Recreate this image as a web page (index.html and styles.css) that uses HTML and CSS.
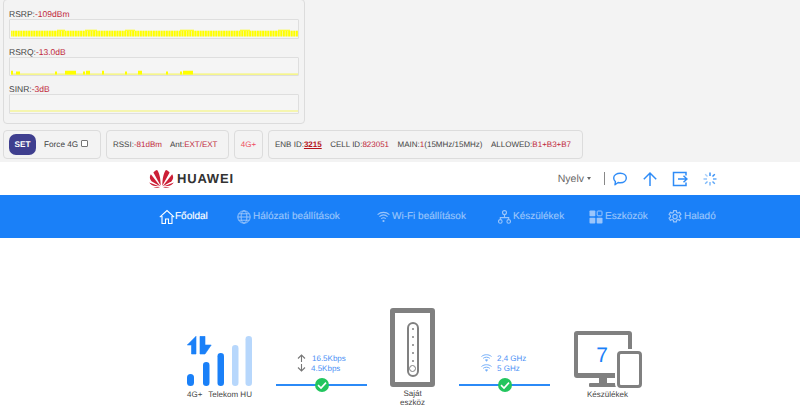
FILE: index.html
```html
<!DOCTYPE html>
<html lang="hu">
<head>
<meta charset="utf-8">
<title>HUAWEI</title>
<link rel="stylesheet" href="styles.css">
</head>
<body>
<section class="top">
  <div class="panel">
    <div class="metric"><span>RSRP:</span><span class="red">-109dBm</span></div>
    <svg class="chart" viewBox="0 0 288 18" preserveAspectRatio="none">
      <defs><pattern id="bars" width="2.6" height="18" patternUnits="userSpaceOnUse"><rect width="2" height="18" fill="#ffff00"/><rect x="2" width=".6" height="18" fill="#f6f68a"/></pattern></defs>
      <rect x="1" y="11" width="287" height="6" fill="url(#bars)"/>
      <path d="M47 10h8v1h-8zM75 10h12v1H75zM115 10h10v1h-10zM170 10h14v1h-14zM230 10h10v1h-10zM268 10h12v1h-12z" fill="#ffff00"/>
    </svg>
    <div class="metric"><span>RSRQ:</span><span class="red">-13.0dB</span></div>
    <svg class="chart" viewBox="0 0 288 18" preserveAspectRatio="none">
      <path d="M1 16h287v1.200H1z" fill="#f5f56a"/>
      <path d="M1 13h2v4H1zM6 14h4v3H6zM45 14h2v3h-2zM55 13h11v4H55zM73 14h2v3h-2zM76 13h4v4h-4zM92 13h2v4h-2zM115 14h2v3h-2zM128 13h4v4h-4zM156 14h2v3h-2zM170 14h2v3h-2zM173 13h10v4h-10z" fill="#ffff00"/>
    </svg>
    <div class="metric"><span>SINR:</span><span class="red">-3dB</span></div>
    <svg class="chart" viewBox="0 0 288 18" preserveAspectRatio="none">
      <path d="M0 16h288v1H0z" fill="#f5f56a"/>
    </svg>
  </div>
  <div class="boxes">
    <div class="box box-set">
      <span class="set">SET</span>
      <span class="force">Force 4G</span>
      <span class="check"></span>
    </div>
    <div class="box box-rssi"><span>RSSI:<span class="red">-81dBm</span></span><span>Ant:<span class="red">EXT/EXT</span></span></div>
    <div class="box box-mode"><span class="pink">4G+</span></div>
    <div class="box box-cell">
      <span>ENB ID:<a class="enb">3215</a></span>
      <span>CELL ID:<span class="red">823051</span></span>
      <span>MAIN:<span class="red">1</span>(15MHz/15MHz)</span>
      <span>ALLOWED:<span class="red">B1+B3+B7</span></span>
    </div>
  </div>
</section>

<header class="head">
  <div class="brand">
    <svg class="logo" viewBox="1 1 24 19.500" width="25" height="18" preserveAspectRatio="none">
      <g fill="#cc1f36">
        <path d="M12 19 3.400 13.200C2 11.300 1 8.600 2.800 5.600Z"/>
        <path d="M12.200 18 5.200 3.800C6 2.400 7.400 1.200 8.800 1c2.200 3 3.400 10 3.400 17Z"/>
        <path d="M13.800 18 20.800 3.800C20 2.400 18.600 1.200 17.200 1c-2.200 3-3.400 10-3.400 17Z"/>
        <path d="M14 19 22.600 13.200C24 11.300 25 8.600 23.200 5.600Z"/>
        <path d="M10.800 18.600 1.200 14.500c1 1.900 3.600 3.900 6 3.900l3.600.2Z"/>
        <path d="M15.200 18.600 24.800 14.500c-1 1.900-3.600 3.900-6 3.900l-3.600.2Z"/>
        <path d="M11.600 19.400H5.200c1.300.8 3.600 1.100 5.200.5Z"/>
        <path d="M14.400 19.400h6.400c-1.300.8-3.600 1.100-5.200.5Z"/>
      </g>
    </svg>
    <span class="wordmark">HUAWEI</span>
  </div>
  <div class="tools">
    <span class="lang">Nyelv<i class="caret"></i></span>
    <i class="divider"></i>
    <svg class="tool tool-chat" viewBox="0 0 16 16" width="16" height="16"><path d="M8.300 2.200c3.500 0 6 2 6 4.800s-2.500 4.800-6 4.800c-.8 0-1.500-.1-2.200-.3L3 13.800l.4-3.200C2.300 9.700 1.700 8.400 1.700 7c0-2.800 3-4.800 6.600-4.800Z" fill="none" stroke="#2f8cf7" stroke-width="1.400" stroke-linejoin="round"/></svg>
    <svg class="tool tool-up" viewBox="0 0 16 16" width="16" height="16"><path d="M8 15V2M1.800 8.200 8 2l6.200 6.200" fill="none" stroke="#2f8cf7" stroke-width="1.500"/></svg>
    <svg class="tool tool-exit" viewBox="0 0 16 16" width="16" height="16"><path d="M14 4.500V1.500H1.500v13H14v-3M6 8h9M11.500 4.800 15 8l-3.500 3.200" fill="none" stroke="#2f8cf7" stroke-width="1.500"/></svg>
    <svg class="tool tool-spin" viewBox="0 0 16 16" width="16" height="16"><g stroke-width="1.400" fill="none"><path d="M8 1.500v3.500" stroke="#2f8cf7"/><path d="m12.800 3.200-2.300 2.300" stroke="#2f8cf7"/><path d="M14.500 8H11" stroke="#5aa5f8"/><path d="m12.800 12.800-2.300-2.300" stroke="#5aa5f8"/><path d="M8 14.500V11" stroke="#7ab7f9"/><path d="m3.200 12.800 2.300-2.300" stroke="#7ab7f9"/><path d="M1.500 8H5" stroke="#8fc1fa"/><path d="m3.200 3.200 2.300 2.300" stroke="#a6cefb"/></g></svg>
  </div>
</header>

<nav class="nav">
  <a class="nav-item active">
    <svg viewBox="0 0 16 16" width="16" height="16"><path d="M.8 8.200 8 1.500l7.200 6.700M3 7v7.500h3.500V10h3v4.500H13V7" fill="none" stroke="currentColor" stroke-width="1.100"/></svg>
    <span>Főoldal</span>
  </a>
  <a class="nav-item">
    <svg viewBox="0 0 14 14" width="14" height="14"><g fill="none" stroke="currentColor" stroke-width="1"><circle cx="7" cy="7" r="6.200"/><ellipse cx="7" cy="7" rx="2.900" ry="6.200"/><path d="M.8 7h12.400M1.700 3.800h10.600M1.700 10.200h10.600"/></g></svg>
    <span>Hálózati beállítások</span>
  </a>
  <a class="nav-item">
    <svg viewBox="0 0 13 12" width="13" height="12"><g fill="none" stroke="currentColor" stroke-width="1.100"><path d="M.6 3.600c3.400-3 8.400-3 11.800 0M2.400 5.600c2.400-2 5.800-2 8.200 0M4.200 7.600c1.400-1 3.200-1 4.600 0"/></g><circle cx="6.500" cy="10" r="1.100" fill="currentColor"/></svg>
    <span>Wi-Fi beállítások</span>
  </a>
  <a class="nav-item">
    <svg viewBox="0 0 13 14" width="13" height="14"><g fill="none" stroke="currentColor" stroke-width="1.100"><circle cx="6.500" cy="2.600" r="2"/><circle cx="2.300" cy="11.400" r="1.800"/><circle cx="10.700" cy="11.400" r="1.800"/><path d="M6.500 4.600v3M2.300 9.600V7.600h8.400v2"/></g></svg>
    <span>Készülékek</span>
  </a>
  <a class="nav-item">
    <svg viewBox="0 0 14 14" width="14" height="14"><g fill="currentColor"><rect x=".5" y=".5" width="5.800" height="5.800" rx=".8"/><rect x=".5" y="7.700" width="5.800" height="5.800" rx=".8"/><rect x="7.700" y="7.700" width="5.800" height="5.800" rx=".8"/></g><rect x="8.200" y="1" width="4.800" height="4.800" rx=".8" fill="none" stroke="currentColor"/></svg>
    <span>Eszközök</span>
  </a>
  <a class="nav-item">
    <svg viewBox="0 0 14 14" width="14" height="14"><g fill="none" stroke="currentColor" stroke-width="1.200"><path d="M5.700.7h2.600l.4 1.800 1.300.6 1.600-.9 1.300 2.200-1.400 1.200v1.400l1.400 1.200-1.300 2.200-1.600-.9-1.300.6-.4 1.800H5.700l-.4-1.800-1.300-.6-1.600.9L1.100 8.200l1.400-1.200V5.600L1.100 4.400l1.300-2.200 1.600.9 1.300-.6Z"/><circle cx="7" cy="6.600" r="2.200"/></g></svg>
    <span>Haladó</span>
  </a>
</nav>

<main class="stage">
  <div class="col col-signal">
    <svg viewBox="0 0 66 50" width="66" height="50">
      <g fill="#1a80f8">
        <path d="M.3 9 9 .3V18H4.500V9ZM13 .3h5V9h6.200L18 18h-5Z" stroke="#1a80f8" stroke-width=".6" stroke-linejoin="round"/>
        <rect y="38" width="7" height="12" rx="3.500"/>
        <rect x="16" y="26" width="6.500" height="24" rx="3.200"/>
        <rect x="30.500" y="17" width="6.500" height="33" rx="3.200"/>
      </g>
      <g fill="#b7d7fc">
        <rect x="45" y="9" width="6.500" height="41" rx="3.200"/>
        <rect x="58.500" y="0" width="6.500" height="50" rx="3.200"/>
      </g>
    </svg>
    <div class="signal-labels"><span>4G+</span><span>Telekom HU</span></div>
  </div>
  <div class="col col-link col-link-up">
    <div class="rate"><svg viewBox="0 0 9 8" width="9" height="8"><path d="M4.500 8V1M1 4.500l3.500-3.500 3.500 3.500" fill="none" stroke="#777" stroke-width="1.100"/></svg><span class="rate-a">16.5Kbps</span></div>
    <div class="rate"><svg viewBox="0 0 9 8" width="9" height="8"><path d="M4.500 0v7M1 3.500l3.500 3.500 3.500-3.500" fill="none" stroke="#777" stroke-width="1.100"/></svg><span class="rate-b">4.5Kbps</span></div>
    <svg class="link" viewBox="0 0 91 14" width="91" height="14"><path d="M0 7h91" stroke="#2b8af7" stroke-width="2"/><circle cx="46" cy="7" r="7" fill="#22c55e"/><path d="m42 7.200 3 2.800 5-5.400" fill="none" stroke="#fff" stroke-width="1.600"/></svg>
  </div>
  <div class="col col-router">
    <div class="router"><div class="pill"><i></i><i></i><i></i><i></i><i></i><b></b></div></div>
    <div class="router-label">Saját<br>eszköz</div>
  </div>
  <div class="col col-link col-link-wifi">
    <div class="rate rate-w"><svg viewBox="0 0 11 8" width="11" height="8"><g fill="none" stroke="#74aef8" stroke-width="1"><path d="M.5 2.500c3-2.400 7-2.400 10 0M2.200 4.300c2-1.500 4.600-1.500 6.600 0"/></g><path d="M3.800 5.800c1-.7 2.400-.7 3.400 0L5.500 7.800Z" fill="#74aef8"/></svg><span>2,4 GHz</span></div>
    <div class="rate rate-w"><svg viewBox="0 0 11 8" width="11" height="8"><g fill="none" stroke="#74aef8" stroke-width="1"><path d="M.5 2.500c3-2.400 7-2.400 10 0M2.200 4.300c2-1.500 4.600-1.500 6.600 0"/></g><path d="M3.800 5.800c1-.7 2.400-.7 3.400 0L5.500 7.800Z" fill="#74aef8"/></svg><span>5 GHz</span></div>
    <svg class="link" viewBox="0 0 91 14" width="91" height="14"><path d="M0 7h91" stroke="#2b8af7" stroke-width="2"/><circle cx="46" cy="7" r="7" fill="#22c55e"/><path d="m42 7.200 3 2.800 5-5.400" fill="none" stroke="#fff" stroke-width="1.600"/></svg>
  </div>
  <div class="col col-devices">
    <div class="devices">
      <div class="monitor-wrap">
        <div class="monitor"><span class="count">7</span></div>
        <div class="neck"></div>
        <div class="foot"></div>
      </div>
      <div class="phone"></div>
    </div>
    <div class="devices-label">Készülékek</div>
  </div>
</main>
</body>
</html>
```

FILE: styles.css
```css
* { box-sizing: border-box; }
html, body { margin: 0; padding: 0; }
body {
  width: 800px;
  height: 407px;
  overflow: hidden;
  background: #fff;
  font-family: "Liberation Sans", Arial, sans-serif;
  font-size: 8px;
  color: #444;
  text-rendering: geometricPrecision;
}
svg { display: block; flex: none; }
.red { color: #c0283a; }
.pink { color: #ee4a5c; }

.top {
  display: flow-root;
  height: 162px;
  background: #f3f3f3;
  padding-left: 3px;
}
.panel {
  width: 302px;
  height: 125px;
  margin-top: -1px;
  border: 1px solid #dcdcdc;
  border-radius: 4px;
  padding: 9px 5px 0;
}
.metric {
  height: 10px;
  line-height: 10px;
  font-size: 8.500px;
}
.chart {
  width: 290px;
  height: 19.500px;
  margin: 0 0 8px 0;
  border: 1px solid #dedede;
  background: #f5f5f5;
  border-radius: 1px;
}
.boxes {
  display: flex;
  gap: 5px;
  margin-top: 6px;
}
.box {
  height: 29px;
  border: 1px solid #dcdcdc;
  border-radius: 4px;
  display: flex;
  align-items: center;
  font-size: 8px;
  white-space: nowrap;
}
.box-set { width: 98px; padding-left: 5px; }
.set {
  width: 27px;
  height: 21px;
  border-radius: 7px;
  background: #3f3f8f;
  color: #fff;
  font-weight: bold;
  font-size: 8.200px;
  display: flex;
  align-items: center;
  justify-content: center;
}
.force { margin-left: 8px; font-size: 8.200px; }
.check {
  width: 7px;
  height: 7px;
  margin: -2px 0 0 3px;
  border: 1px solid #767676;
  border-radius: 1px;
  background: #fff;
}
.box-rssi { width: 123px; padding-left: 6px; gap: 8px; }
.box-mode { width: 29px; justify-content: center; }
.box-cell { width: 315px; padding-left: 6px; gap: 8.500px; }
.enb { color: #b5121b; font-weight: bold; text-decoration: underline; }

.head {
  height: 33px;
  display: flex;
  align-items: center;
  padding: 0 82px 0 149px;
}
.brand { display: flex; align-items: center; gap: 3px; }
.wordmark {
  font-weight: bold;
  font-size: 13px;
  letter-spacing: .8px;
  color: #333;
}
.tools { margin-left: auto; display: flex; align-items: center; }
.lang { font-size: 10.500px; color: #666; display: flex; align-items: center; }
.caret {
  margin-left: 3px;
  border-top: 3px solid #666;
  border-left: 2.500px solid transparent;
  border-right: 2.500px solid transparent;
}
.divider {
  width: 1px;
  height: 13px;
  background: #888;
  margin: 0 7px 0 13px;
}
.tool-up, .tool-exit, .tool-spin { margin-left: 14px; }

.nav {
  height: 43px;
  background: #1a80f8;
  display: grid;
  grid-template-columns: 78px 140px 121px 91px 79px auto;
  align-items: center;
  padding-left: 159px;
}
.nav-item {
  display: flex;
  align-items: center;
  gap: 2px;
  color: #9ac5fb;
  font-size: 10px;
  -webkit-text-stroke: .15px currentColor;
}
.nav-item.active { color: #fff; gap: 0; }

.stage {
  display: flex;
  align-items: flex-start;
  padding: 70px 0 0 187px;
}
.col-signal { width: 89px; margin-top: 28px; }
.signal-labels {
  display: flex;
  gap: 6px;
  margin-top: 4px;
  font-size: 8px;
  color: #444;
}
.col-link { width: 91px; margin-top: 45px; }
.col-link-wifi { margin-left: 24px; }
.rate {
  display: flex;
  align-items: center;
  height: 10px;
  padding-left: 21px;
  font-size: 8px;
  color: #4a90f5;
}
.rate-a { margin-left: 6px; }
.rate-b { margin-left: 5px; }
.rate-w { gap: 5px; padding-left: 22px; }
.link { margin-top: 5px; }

.col-router { width: 45px; margin-left: 23px; }
.router {
  width: 45px;
  height: 79px;
  border: 5px solid #808080;
  border-radius: 3px;
  display: flex;
  justify-content: center;
  padding-top: 9px;
}
.pill {
  width: 12px;
  height: 55px;
  border: 2px solid #808080;
  border-radius: 6px;
  display: flex;
  flex-direction: column;
  align-items: center;
  gap: 6px;
  padding-top: 4px;
}
.pill i { width: 2px; height: 2px; background: #808080; border-radius: 50%; }
.pill b { width: 7px; height: 7px; border: 1.200px solid #808080; border-radius: 50%; margin-top: -3px; }
.router-label {
  text-align: center;
  margin-top: 3px;
  font-size: 8px;
  line-height: 8.500px;
  color: #444;
}
.col-devices { margin-left: 24px; margin-top: 23px; width: 68px; }
.devices { display: flex; align-items: flex-start; height: 59px; }
.monitor-wrap { width: 58px; display: flex; flex-direction: column; align-items: center; }
.monitor {
  width: 58px;
  height: 47px;
  border: 4px solid #808080;
  border-bottom-width: 5px;
  border-radius: 3px;
  display: flex;
  justify-content: center;
  padding: 10px 2px 0 0;
}
.count { font-size: 21px; line-height: 22px; color: #1a80f8; }
.neck { width: 8px; height: 5px; background: #808080; }
.foot { width: 28px; height: 4px; background: #808080; border-radius: 1px; }
.phone {
  width: 25px;
  height: 37px;
  margin: 20px 0 0 -15px;
  background: #fff;
  border: 3px solid #808080;
  border-radius: 4px;
  box-shadow: 0 0 0 2px #fff;
}
.devices-label {
  margin: 0 0 0 13px;
  font-size: 8px;
  color: #444;
  white-space: nowrap;
}
```
